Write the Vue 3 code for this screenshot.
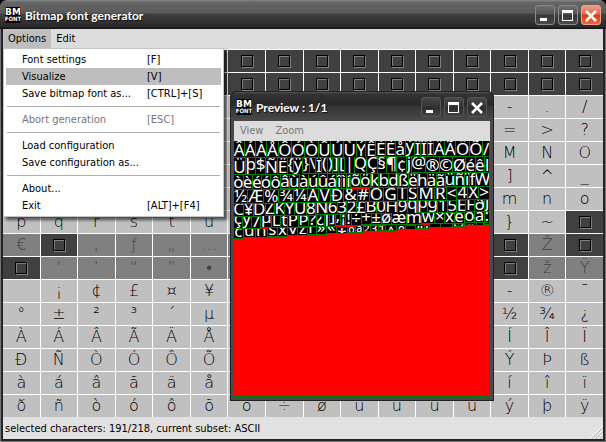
<script setup>
const range = (from, to) =>
  Array.from({ length: to - from + 1 }, (_, i) => String.fromCharCode(from + i))

const blank = Array.from({ length: 32 }, () => '')
const extended = [
  '€', '', '‚', 'ƒ', '„', '…', '†', '‡', 'ˆ', '‰', 'Š', '‹', 'Œ', '', 'Ž', '',
  '', '‘', '’', '“', '”', '•', '–', '—', '˜', '™', 'š', '›', 'œ', '', 'ž', 'Ÿ',
]
const latin = range(0xa0, 0xff).map((c) => (c === '\u00ad' ? '-' : c))

const cells = [
  ...blank.map((ch) => ({ ch, state: 'missing' })),
  ...range(0x20, 0x7e).map((ch) => ({ ch, state: 'selected' })),
  { ch: '', state: 'missing' },
  ...extended.map((ch) => ({ ch, state: ch ? 'off' : 'missing' })),
  ...latin.map((ch) => ({ ch, state: 'selected' })),
]

const menuItems = [
  { label: 'Font settings', key: '[F]' },
  { label: 'Visualize', key: '[V]', active: true },
  { label: 'Save bitmap font as...', key: '[CTRL]+[S]' },
  { separator: true },
  { label: 'Abort generation', key: '[ESC]', disabled: true },
  { separator: true },
  { label: 'Load configuration' },
  { label: 'Save configuration as...' },
  { separator: true },
  { label: 'About...' },
  { label: 'Exit', key: '[ALT]+[F4]' },
]

// Glyphs are cropped to their ink: deep ones hang below the baseline,
// high ones sit against the top edge of their cell.
const deep = 'þ${ÿý}\\()][|QÇ§¶j@gqpyçµ¿;,'
const high = '*ºª²³¹^°¯"\'~`´¨'
const placement = (ch) => (deep.includes(ch) ? 'deep' : high.includes(ch) ? 'high' : 'base')

// Packed texture rows: each row drifts upwards by `rise` from left to right.
const packed = [
  { text: 'ÂÁÀÅÔÓÒÛÚÙÝÊÉÈåýÏÎÍÄÃÖÕ/', height: 17, end: 16, rise: 0 },
  { text: 'Üþ$ÑË{ÿ}\\Ï()][|QÇ§¶¢j@®©Øéêl', height: 17, end: 16, rise: 1 },
  { text: 'òèéóôâùàúûáîìíõökbdßëhäãüñïfW', height: 15, end: 14, rise: 2 },
  { text: '½Æ%¾¼AVÐ&#OGTSMR<4X>', height: 14, end: 13, rise: 3 },
  { text: 'C¥DZKYU8N632£B0H9qpg15EFðj', height: 13, end: 12, rise: 4 },
  { text: 'çy7µLtPÞ?¿J];¡!÷+±øæmw×xeoa:', height: 12, end: 11, rise: 5 },
  { text: 'cunsxvzr»«*ºª²³¹^°¯"\'~=`´¨-.', height: 10, end: 2, rise: 6 },
].map((row) => {
  const glyphs = Array.from(row.text)
  return glyphs.map((ch, i) => {
    const t = i / (glyphs.length - 1)
    const lift = Math.round(row.rise * t)
    const drop = Math.round((row.rise + row.height - row.end) * t)
    return {
      ch,
      place: placement(ch),
      style: {
        marginTop: `${-lift}px`,
        height: `${row.height + lift - drop}px`,
      },
    }
  })
})
</script>

<template>
  <main class="window app">
    <header class="titlebar">
      <svg class="logo" viewBox="0 0 16 16" aria-hidden="true">
        <rect width="16" height="16" rx="2" />
        <text x="8" y="8" class="logo-top">BM</text>
        <text x="8" y="14" class="logo-bottom">FONT</text>
      </svg>
      <h1>Bitmap font generator</h1>
      <div class="controls">
        <button type="button" aria-label="Minimize">
          <svg viewBox="0 0 18 18"><path d="M4 12h7v3H4z" /></svg>
        </button>
        <button type="button" aria-label="Maximize">
          <svg viewBox="0 0 18 18"><path fill-rule="evenodd" d="M3 4h11v11H3zM4 7v7h9V7z" /></svg>
        </button>
        <button type="button" aria-label="Close" class="close">
          <svg viewBox="0 0 18 18"><path class="cross" d="M4 5l10 10m0-10l-10 10" /></svg>
        </button>
      </div>
    </header>

    <nav class="menubar">
      <button type="button" class="open">Options</button>
      <button type="button">Edit</button>
      <div class="dropdown">
        <template v-for="(item, i) in menuItems" :key="i">
          <hr v-if="item.separator" />
          <button v-else type="button" :class="{ active: item.active }" :disabled="item.disabled">
            <span>{{ item.label }}</span>
            <span>{{ item.key }}</span>
          </button>
        </template>
      </div>
    </nav>

    <section class="charmap">
      <button v-for="(cell, i) in cells" :key="i" type="button" :class="cell.state">
        <i v-if="cell.state === 'missing'" class="box"></i>
        <template v-else>{{ cell.ch }}</template>
      </button>
    </section>

    <footer class="status">
      <span>selected characters: 191/218, current subset: ASCII</span>
      <svg class="grip" viewBox="0 0 13 13" aria-hidden="true">
        <path class="light" d="M0 13L13 0M4 13l9-9M8 13l5-5" />
        <path class="dark" d="M1.500 13L13 1.500M5.500 13L13 5.500M9.500 13L13 9.500" />
      </svg>
    </footer>

    <section class="window preview">
      <header class="titlebar">
        <svg class="logo" viewBox="0 0 16 16" aria-hidden="true">
          <rect width="16" height="16" rx="2" />
          <text x="8" y="8" class="logo-top">BM</text>
          <text x="8" y="14" class="logo-bottom">FONT</text>
        </svg>
        <h2>Preview : 1/1</h2>
        <div class="controls">
          <button type="button" aria-label="Minimize">
            <svg viewBox="0 0 18 18"><path d="M4 12h7v3H4z" /></svg>
          </button>
          <button type="button" aria-label="Maximize">
            <svg viewBox="0 0 18 18"><path fill-rule="evenodd" d="M3 4h11v11H3zM4 7v7h9V7z" /></svg>
          </button>
          <button type="button" aria-label="Close">
            <svg viewBox="0 0 18 18"><path class="cross" d="M4 5l10 10m0-10l-10 10" /></svg>
          </button>
        </div>
      </header>
      <nav class="menubar">
        <button type="button">View</button>
        <button type="button">Zoom</button>
      </nav>
      <div class="texture">
        <div v-for="(row, r) in packed" :key="r" class="packed">
          <span v-for="(g, i) in row" :key="i" :class="g.place" :style="g.style">{{ g.ch }}</span>
        </div>
      </div>
    </section>
  </main>
</template>

<style>
body {
  margin: 0;
  background: #000;
}
</style>

<style scoped>
* {
  box-sizing: border-box;
}

button {
  margin: 0;
  padding: 0;
  border: 0;
  background: none;
  color: inherit;
  font: inherit;
}

.window {
  display: flex;
  flex-direction: column;
  background: #4a4a4a;
  font: 11px/17px "DejaVu Sans Condensed", "DejaVu Sans", sans-serif;
  color: #000;
}

.app {
  position: relative;
  min-height: 100vh;
  padding: 0 3px 3px;
  border-radius: 7px 7px 0 0;
  background: #242424;
  box-shadow: inset 1px -1px 0 #777, inset -1px 0 0 #777;
}

.titlebar {
  display: flex;
  align-items: center;
  gap: 4px;
  height: 29px;
  margin: 0 -3px;
  padding: 1px 5px 0;
  border-radius: 7px 7px 0 0;
  background: linear-gradient(#8a8a8a 0, #666 2px, #5a5a5a 13px, #414141 14px, #292929 27px, #151515 28px);
}

.titlebar h1,
.titlebar h2 {
  flex: 1;
  margin: 0;
  padding-top: 1px;
  color: #fff;
  font: 700 12px/16px Lato, "Open Sans", sans-serif;
  text-shadow: 1px 1px 1px #111;
}

.logo {
  width: 16px;
  height: 16px;
}

.logo text {
  fill: #fff;
  text-anchor: middle;
  font-weight: 700;
}

.logo-top {
  font-family: "DejaVu Sans", sans-serif;
  font-size: 9px;
}

.logo-bottom {
  font-size: 6px;
}

.controls {
  display: flex;
  gap: 3px;
}

.controls button {
  display: flex;
  width: 20px;
  height: 20px;
  border: 1px solid #8a8a8a;
  border-radius: 3px;
  background: linear-gradient(#6e6e6e, #555 45%, #383838 50%, #4a4a4a);
}

.controls svg {
  width: 18px;
  height: 18px;
  fill: #fff;
}

.controls .cross {
  fill: none;
  stroke: #fff;
  stroke-width: 2.500;
}

.app > .titlebar .close {
  border-color: #f0a08c;
  background: linear-gradient(#f09a82, #e8684a 45%, #dc3816 50%, #ef6a3c);
}

.menubar {
  display: flex;
  position: relative;
  height: 20px;
  background: #dcdcdc;
}

.menubar > button {
  padding: 0 5px 2px;
}

.menubar > .open {
  background: #bebebe;
}

.dropdown {
  position: absolute;
  z-index: 2;
  top: 19px;
  left: 0;
  width: 221px;
  padding: 2px;
  border: 1px solid #c4c4c4;
  background: #fff;
  box-shadow: 3px 3px 3px rgba(0, 0, 0, 0.6);
}

.dropdown button {
  display: grid;
  grid-template-columns: 125px 1fr;
  width: 100%;
  height: 17px;
  padding: 0 16px;
  text-align: left;
  white-space: nowrap;
}

.dropdown button:disabled {
  color: #777;
}

.dropdown .active {
  background: #bebebe;
}

.dropdown hr {
  height: 1px;
  margin: 4px 1px;
  border: 0;
  background: #b0b0b0;
}

.charmap {
  display: grid;
  grid-template-columns: repeat(16, minmax(0, 1fr));
  grid-auto-rows: 22px;
  gap: 1px;
  padding-top: 1px;
  background: #fff;
}

.charmap button {
  display: flex;
  align-items: center;
  justify-content: center;
  overflow: hidden;
  background: #c0c0c0;
  font: 200 16px/22px "DejaVu Sans", sans-serif;
}

.charmap .off {
  background: #808080;
  color: #404040;
}

.charmap .missing {
  background: #404040;
}

.box {
  width: 12px;
  height: 12px;
  border: 1px solid #000;
  box-shadow: 1px 1px 0 #808080, inset 1px 1px 0 #808080;
}

.status {
  display: flex;
  flex: 1;
  align-items: center;
  justify-content: space-between;
  min-height: 21px;
  padding-left: 2px;
  background: #e1e1e1;
}

.grip {
  align-self: flex-end;
  width: 13px;
  height: 13px;
}

.grip path {
  fill: none;
}

.grip .light {
  stroke: #fff;
}

.grip .dark {
  stroke: #a8a8a8;
}

.preview {
  position: absolute;
  z-index: 3;
  top: 91px;
  left: 230px;
  width: 264px;
  padding: 0 4px 4px;
  border-radius: 7px 7px 0 0;
  box-shadow: inset 0 0 0 1px #222;
}

.preview .titlebar {
  height: 30px;
  margin: 0 -4px;
  padding: 1px 6px 0 5px;
  border: solid #222;
  border-width: 1px 1px 0;
  background: linear-gradient(#555 0, #333 2px, #292929 13px, #333 14px, #4a4a4a);
}

.preview .controls button {
  border-color: #555;
  background: linear-gradient(#484848, #333 50%, #2b2b2b 51%, #444);
}

.preview .menubar {
  color: #777;
}

.preview .menubar > button {
  padding: 0 6px 2px;
}

.texture {
  aspect-ratio: 1;
  overflow: hidden;
  border-bottom: 1px solid #008000;
  background: #f00;
}

.packed {
  display: flex;
  align-items: flex-start;
  color: #fff;
  font-family: "Noto Sans", sans-serif;
  font-size: 17px;
  line-height: 14px;
}

.packed span {
  display: flex;
  flex: 1 1 auto;
  align-items: flex-end;
  justify-content: center;
  overflow: hidden;
  border: solid #008000;
  border-width: 0 1px 1px 0;
  background: #000;
}

.packed .deep {
  line-height: 20px;
}

.packed .high {
  align-items: flex-start;
}
</style>
